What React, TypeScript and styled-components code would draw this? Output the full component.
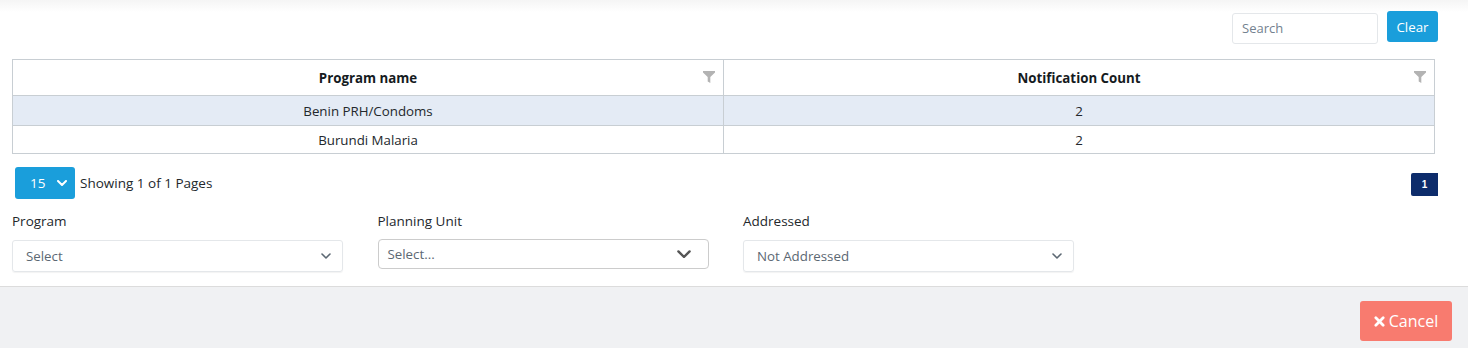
import React from 'react'
import styled, { createGlobalStyle } from 'styled-components'

const GlobalStyle = createGlobalStyle`
  body {
    margin: 0;
    background: #ffffff;
    font-family: "Open Sans", "Noto Sans", sans-serif;
    color: #23282c;
  }
`

const Page = styled.div`
  width: 1468px;
  height: 348px;
  display: flex;
  flex-direction: column;
  background: linear-gradient(#f5f5f5 0px, #ffffff 12px);
`

const Body = styled.div`
  padding: 11px 30px 0 12px;
  height: 287px;
  flex: none;
  box-sizing: border-box;
  border-bottom: 1px solid #dcdcdc;
`

const Toolbar = styled.div`
  display: flex;
  justify-content: flex-end;
  align-items: center;
  gap: 9px;
  height: 32px;
`

const SearchInput = styled.input`
  width: 146px;
  height: 31px;
  box-sizing: border-box;
  border: 1px solid #e4e7ea;
  border-radius: 3px;
  padding: 0 9px;
  font-family: inherit;
  font-size: 13px;
  color: #5c6873;
  margin-top: 2px;
  &::placeholder { color: #73818f; }
`

const Button = styled.button<{ $bg: string }>`
  background: ${p => p.$bg};
  color: #fff;
  border: none;
  border-radius: 3px;
  font-family: inherit;
  cursor: pointer;
  display: inline-flex;
  align-items: center;
  justify-content: center;
`

const ClearButton = styled(Button)`
  width: 51px;
  height: 31px;
  font-size: 13.3px;
  margin-top: -1px;
`

const Table = styled.table`
  margin-top: 16px;
  width: 1423px;
  border-collapse: collapse;
  font-size: 13.3px;
  border: 1px solid #c8ced3;
`

const Th = styled.th`
  height: 35px;
  padding: 0;
  border: 1px solid #c8ced3;
  font-weight: 700;
  color: #151b1e;
  position: relative;
  width: 50%;
`

const FilterIcon = styled.svg`
  position: absolute;
  right: 8px;
  top: 11px;
`

const Tr = styled.tr<{ $active?: boolean }>`
  background: ${p => (p.$active ? '#e4ebf5' : '#ffffff')};
`

const Td = styled.td<{ $h: number }>`
  height: ${p => p.$h}px;
  padding: 0;
  border: 1px solid #c8ced3;
  text-align: center;
  color: #23282c;
`

const PagerRow = styled.div`
  display: flex;
  align-items: center;
  margin-top: 13px;
  padding-left: 3px;
  height: 32px;
`

const SizeSelect = styled.div`
  width: 60px;
  height: 32px;
  background: #1a9edb;
  border-radius: 3px;
  color: #fff;
  font-size: 13.5px;
  display: flex;
  align-items: center;
  justify-content: space-between;
  padding: 0 8px 0 15px;
  box-sizing: border-box;
`

const PagerText = styled.span`
  margin-left: 5px;
  font-size: 13.5px;
  color: #23282c;
`

const PageButton = styled.div`
  margin-left: auto;
  margin-top: 3px;
  width: 27px;
  height: 23px;
  background: #0d2c6b;
  border-radius: 2px 0 0 2px;
  color: #fff;
  font-size: 10px;
  font-weight: 700;
  display: flex;
  align-items: center;
  justify-content: center;
  font-family: "Liberation Sans", Arial, sans-serif;
`

const Filters = styled.div`
  display: grid;
  grid-template-columns: 331px 331px 331px;
  column-gap: 34.5px;
  margin-top: 13px;
`

const Field = styled.div`
  display: flex;
  flex-direction: column;
`

const Label = styled.label`
  font-size: 13.5px;
  color: #23282c;
  height: 19px;
  line-height: 19px;
  margin-bottom: 9px;
`

const SelectBox = styled.div<{ $react?: boolean }>`
  height: ${p => (p.$react ? 30 : 32)}px;
  margin-top: ${p => (p.$react ? -1 : 0)}px;
  box-sizing: border-box;
  border: 1px solid ${p => (p.$react ? '#cccccc' : '#e4e7ea')};
  border-radius: ${p => (p.$react ? 4 : 3)}px;
  display: flex;
  align-items: center;
  justify-content: space-between;
  padding: 0 ${p => (p.$react ? 17 : 11)}px 0 ${p => (p.$react ? 9 : 13)}px;
  font-size: 13.3px;
  color: #5c6873;
  box-shadow: ${p => (p.$react ? 'none' : '0 1px 1px rgba(0,0,0,0.05)')};
`

const Footer = styled.div`
  flex: 1;
  background: #f0f1f3;
  display: flex;
  justify-content: flex-end;
  align-items: flex-start;
  padding: 14px 16px 0 0;
`

const CancelButton = styled(Button)`
  width: 92px;
  height: 40px;
  font-size: 16px;
  gap: 4px;
`

const Chevron = ({ size = 10, color = '#5c6873', stroke = 1.6 }: { size?: number; color?: string; stroke?: number }) => (
  <svg width={size} height={size * 0.6} viewBox="0 0 10 6">
    <path d="M1 1 L5 5 L9 1" fill="none" stroke={color} strokeWidth={stroke} strokeLinecap="round" strokeLinejoin="round" />
  </svg>
)

const Funnel = () => (
  <FilterIcon width="12" height="12" viewBox="0 0 12 12">
    <path d="M0 0 H12 V1.5 L7.3 6 V12 L4.7 10.5 V6 L0 1.5 Z" fill="#b3b3b3" />
  </FilterIcon>
)

const rows = [
  { name: 'Benin PRH/Condoms', count: 2 },
  { name: 'Burundi Malaria', count: 2 },
]

export default function App() {
  return (
    <Page>
      <GlobalStyle />
      <Body>
        <Toolbar>
          <SearchInput placeholder="Search" />
          <ClearButton $bg="#1a9edb">Clear</ClearButton>
        </Toolbar>
        <Table>
          <thead>
            <tr>
              <Th>Program name<Funnel /></Th>
              <Th>Notification Count<Funnel /></Th>
            </tr>
          </thead>
          <tbody>
            {rows.map((r, i) => (
              <Tr key={r.name} $active={i === 0}>
                <Td $h={i === 0 ? 29 : 27}>{r.name}</Td>
                <Td $h={i === 0 ? 29 : 27}>{r.count}</Td>
              </Tr>
            ))}
          </tbody>
        </Table>
        <PagerRow>
          <SizeSelect>
            15
            <Chevron size={10} color="#ffffff" stroke={2} />
          </SizeSelect>
          <PagerText>Showing 1 of 1 Pages</PagerText>
          <PageButton>1</PageButton>
        </PagerRow>
        <Filters>
          <Field>
            <Label>Program</Label>
            <SelectBox>
              Select
              <Chevron size={10} />
            </SelectBox>
          </Field>
          <Field>
            <Label>Planning Unit</Label>
            <SelectBox $react>
              Select...
              <Chevron size={14} color="#555" stroke={1.7} />
            </SelectBox>
          </Field>
          <Field>
            <Label>Addressed</Label>
            <SelectBox>
              Not Addressed
              <Chevron size={10} />
            </SelectBox>
          </Field>
        </Filters>
      </Body>
      <Footer>
        <CancelButton $bg="#f87b6f">
          <svg width="11" height="11" viewBox="0 0 12 12">
            <path d="M2 2 L10 10 M10 2 L2 10" stroke="#fff" strokeWidth="3" strokeLinecap="round" />
          </svg>
          Cancel
        </CancelButton>
      </Footer>
    </Page>
  )
}
